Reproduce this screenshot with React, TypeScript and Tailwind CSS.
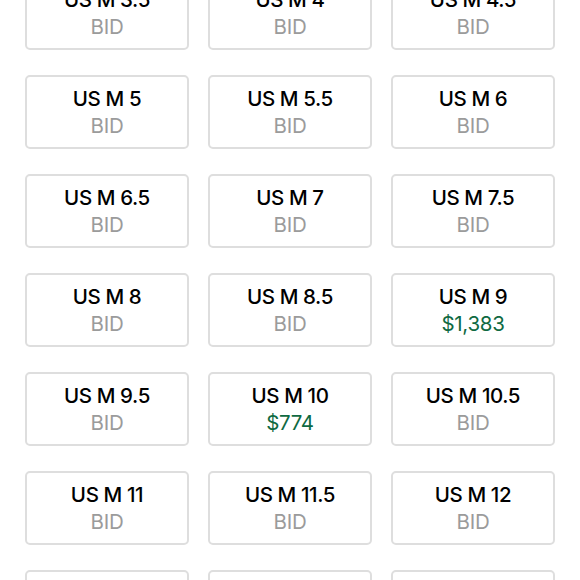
import React from 'react';

type Size = { label: string; price?: string };

const sizes: Size[] = [
  { label: 'US M 3.5' },
  { label: 'US M 4' },
  { label: 'US M 4.5' },
  { label: 'US M 5' },
  { label: 'US M 5.5' },
  { label: 'US M 6' },
  { label: 'US M 6.5' },
  { label: 'US M 7' },
  { label: 'US M 7.5' },
  { label: 'US M 8' },
  { label: 'US M 8.5' },
  { label: 'US M 9', price: '$1,383' },
  { label: 'US M 9.5' },
  { label: 'US M 10', price: '$774' },
  { label: 'US M 10.5' },
  { label: 'US M 11' },
  { label: 'US M 11.5' },
  { label: 'US M 12' },
  { label: 'US M 12.5' },
  { label: 'US M 13' },
  { label: 'US M 14' },
];

export default function App() {
  return (
    <div className="h-[580px] overflow-hidden bg-white font-['Inter',sans-serif]">
      <div className="grid grid-cols-3 gap-x-[19px] gap-y-[25px] px-[25px] mt-[-24px]">
        {sizes.map((s) => (
          <button
            key={s.label}
            className="h-[74px] flex flex-col items-center justify-center rounded-[5px] border-2 border-[#dedede] bg-white"
          >
            <span className="text-[20.5px] leading-[27px] font-medium text-black tracking-[-0.4px]">{s.label}</span>
            {s.price ? (
              <span className="text-[20.5px] leading-[27px] text-[#0f6a42] tracking-[-0.3px]">{s.price}</span>
            ) : (
              <span className="text-[20.5px] leading-[27px] text-[#9b9b9b] tracking-[-0.3px]">BID</span>
            )}
          </button>
        ))}
      </div>
    </div>
  );
}
